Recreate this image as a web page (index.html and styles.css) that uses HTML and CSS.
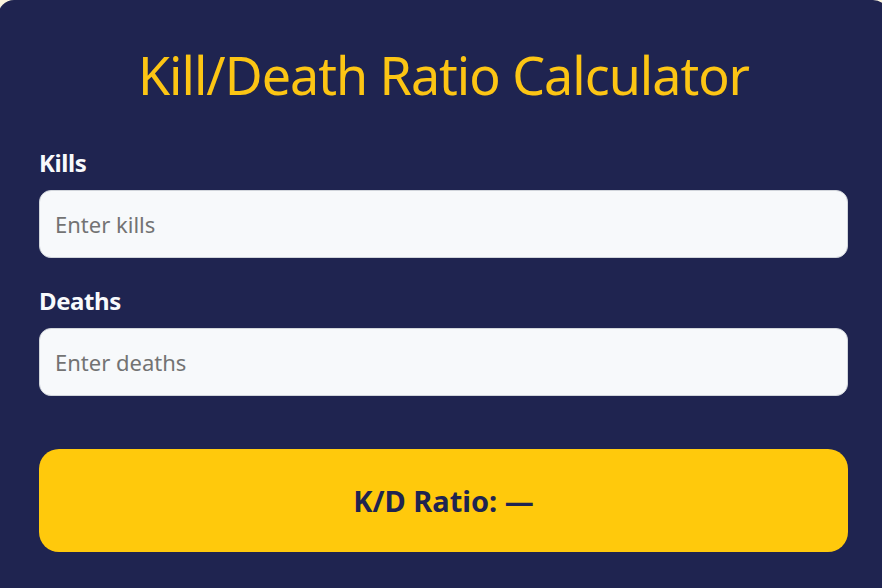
FILE: index.html
```html
<!DOCTYPE html>
<html lang="en">
<head>
    <meta charset="UTF-8">
    <meta name="viewport" content="width=device-width, initial-scale=1.0">
    <title>Kill/Death Ratio Calculator</title>
    <link rel="stylesheet" href="styles.css">
</head>
<body>
    <div class="calculator">
        <h1>Kill/Death Ratio Calculator</h1>
        <div class="field">
            <label for="kills">Kills</label>
            <input type="number" id="kills" placeholder="Enter kills">
        </div>
        <div class="field">
            <label for="deaths">Deaths</label>
            <input type="number" id="deaths" placeholder="Enter deaths">
        </div>
        <div class="result" id="result">K/D Ratio: &mdash;</div>
    </div>

    <script>
        const killsInput = document.getElementById('kills');
        const deathsInput = document.getElementById('deaths');
        const result = document.getElementById('result');

        function updateRatio() {
            const kills = parseFloat(killsInput.value);
            const deaths = parseFloat(deathsInput.value);
            if (isNaN(kills) || isNaN(deaths)) {
                result.textContent = 'K/D Ratio: \u2014';
                return;
            }
            const ratio = deaths === 0 ? kills : kills / deaths;
            result.textContent = 'K/D Ratio: ' + ratio.toFixed(2);
        }

        killsInput.addEventListener('input', updateRatio);
        deathsInput.addEventListener('input', updateRatio);
    </script>
</body>
</html>
```

FILE: styles.css
```css
body {
    margin: 0;
    background-color: #fbf5df;
    font-family: "Noto Sans", "Open Sans", sans-serif;
    overflow: hidden;
}
.calculator {
    width: 891px;
    margin-left: -2px;
    min-height: 100vh;
    box-sizing: border-box;
    padding: 44px 41px 0;
    background: #1f2450;
    border-radius: 16px 16px 0 0;
}
h1 {
    margin: 0 0 41px;
    text-align: center;
    color: #fcc514;
    font-size: 52px;
    font-weight: 400;
    line-height: 62px;
    letter-spacing: -1px;
}
.field {
    display: flex;
    flex-direction: column;
    margin-bottom: 27px;
}
.field label {
    color: #f8fafc;
    font-size: 24px;
    font-weight: 700;
    line-height: 32px;
    letter-spacing: -0.4px;
    margin-bottom: 11px;
}
.field input {
    height: 68px;
    box-sizing: border-box;
    padding: 0 15px;
    border: 1px solid #d1d5db;
    border-radius: 12px;
    background: #f7f9fb;
    font-family: inherit;
    font-size: 22px;
    color: #1f2450;
}
.field input::placeholder {
    color: #737373;
}
.result {
    margin-top: 53px;
    height: 103px;
    display: flex;
    align-items: center;
    justify-content: center;
    border-radius: 20px;
    background: #ffc90c;
    color: #1f2450;
    font-size: 29px;
    font-weight: 700;
}
```
